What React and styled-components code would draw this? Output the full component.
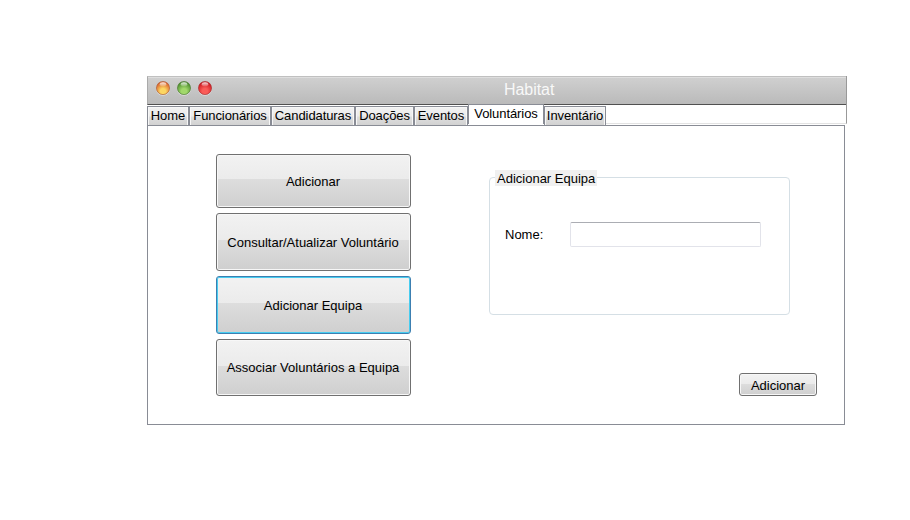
import React from 'react';
import styled, { createGlobalStyle, css } from 'styled-components';

const GlobalStyle = createGlobalStyle`
  * { box-sizing: border-box; }
  body {
    margin: 0;
    background: #fff;
    color: #000;
    font: 13px/15px "Liberation Sans", Arial, sans-serif;
    overflow: hidden;
  }
  button, input { font: inherit; color: inherit; }
`;

const Page = styled.main`
  height: 520px;
  padding: 76px 0 0 147px;
`;

const Header = styled.header`
  width: 700px;
  height: 48px;
  border-right: 1px solid #999;
  border-bottom: 1px solid #e3e3e3;
`;

const TitleBar = styled.div`
  display: flex;
  height: 29px;
  border-top: 1px solid #c0c0c0;
  border-bottom: 1px solid #505050;
  border-left: 1px solid #aaa;
  box-shadow: inset 0 1px #dedede;
  background: linear-gradient(#d0d0d0, #bababa);
`;

const Lights = styled.div`
  display: flex;
  gap: 5px;
  width: 356px;
  padding: 3px 0 0 7px;
`;

const Light = styled.svg`
  display: block;
  width: 16px;
  height: 16px;
  flex: none;
`;

const Title = styled.h1`
  margin: 0;
  padding-top: 4px;
  font-size: 16px;
  font-weight: 400;
  line-height: 18px;
  letter-spacing: -0.05px;
  color: #f8f8f8;
`;

const TabStrip = styled.nav`
  display: flex;
  align-items: flex-start;
  height: 19px;
`;

const Tab = styled.button`
  flex: none;
  width: ${(p) => p.$width}px;
  height: 19px;
  margin: 1px 0 0;
  padding: 0 0 1px;
  border: 1px solid #898c95;
  border-bottom: 0;
  background: linear-gradient(#f2f2f2, #ebebeb 50%, #dddddd 56%, #d2d2d2);
  box-shadow: inset 1px 1px #f7f7f7, inset -1px 0 #f7f7f7;
  line-height: 15px;
  text-align: center;
  white-space: nowrap;
  ${(p) =>
    p.$selected &&
    css`
      margin-top: -1px;
      height: 20px;
      padding-bottom: 3px;
      background: #fff;
      box-shadow: none;
    `}
`;

const TabName = styled.span`
  display: block;
  margin: 0 -2px;
  letter-spacing: -0.08px;
`;

const Panel = styled.section`
  display: flex;
  width: 698px;
  height: 300px;
  margin-top: 1px;
  border: 1px solid #898c95;
  background: #fff;
`;

const Actions = styled.div`
  display: flex;
  flex-direction: column;
  gap: 5px;
  width: 195px;
  margin: 28px 78px 0 68px;
`;

const Button = styled.button`
  flex: none;
  width: ${(p) => p.$width}px;
  height: ${(p) => p.$height}px;
  padding: ${(p) => p.$drop || 0}px ${(p) => (p.$drop ? 0 : 1)}px 0 0;
  border: 1px solid ${(p) => (p.$focused ? '#3c7fb1' : '#707070')};
  border-radius: 3px;
  background: linear-gradient(#f2f2f2, #ebebeb 47%, #dddddd 47%, #cfcfcf);
  box-shadow: inset 0 0 0 1px ${(p) => (p.$focused ? '#48cdf0' : '#f7f7f7')};
  text-align: center;
  white-space: nowrap;
`;

const Editor = styled.div`
  display: flex;
  flex-direction: column;
  width: 328px;
`;

const Group = styled.fieldset`
  width: 301px;
  height: 145px;
  margin: 44px 0 0;
  padding: 37px 0 0 15px;
  border: 1px solid #d5dfe5;
  border-radius: 4px;
`;

const Legend = styled.legend`
  margin-left: -10px;
  padding: 1px 2px 0;
  height: 15px;
  width: 102px;
  background: #f0f0f0;
  box-shadow: 0 1px #f0f0f0;
  white-space: nowrap;
`;

const Field = styled.label`
  display: flex;
  align-items: center;
`;

const FieldName = styled.span`
  width: 65px;
`;

const Input = styled.input`
  width: 191px;
  height: 25px;
  padding: 0 3px;
  border: 1px solid #e2e3ea;
  border-top-color: #abadb3;
  border-radius: 2px;
  background: #fff;
  outline: none;
`;

const Footer = styled.div`
  display: flex;
  justify-content: flex-end;
  margin-top: 58px;
`;

const tabs = [
  ['Home', 42],
  ['Funcionários', 82],
  ['Candidaturas', 84],
  ['Doações', 59],
  ['Eventos', 54],
  ['Voluntários', 76],
  ['Inventário', 62],
];

const lights = [
  ['orange', '#d8602c', '#fcd763', '#a3562f'],
  ['green', '#4a8c2c', '#a2d86c', '#48702f'],
  ['red', '#cc1820', '#fa5c58', '#9c2c2c'],
];

const actions = [
  ['Adicionar', 54],
  ['Consultar/Atualizar Voluntário', 58],
  ['Adicionar Equipa', 58],
  ['Associar Voluntários a Equipa', 57],
];

function TrafficLight({ id, dark, glow, rim }) {
  return (
    <Light viewBox="0 0 16 16" aria-hidden="true">
      <defs>
        <radialGradient id={`${id}-body`} cx="50%" cy="74%" r="66%">
          <stop offset="0" stopColor={glow} />
          <stop offset=".3" stopColor={glow} />
          <stop offset="1" stopColor={dark} />
        </radialGradient>
        <linearGradient id={`${id}-shine`} x2="0" y2="1">
          <stop offset="0" stopColor="#fff" stopOpacity=".9" />
          <stop offset="1" stopColor="#fff" stopOpacity=".15" />
        </linearGradient>
      </defs>
      <circle cx="8" cy="8.7" r="7.1" fill="#eee" opacity=".65" />
      <circle cx="8" cy="8" r="6.6" fill={`url(#${id}-body)`} stroke={rim} strokeWidth=".6" />
      <ellipse cx="8" cy="4.2" rx="3.3" ry="2" fill={`url(#${id}-shine)`} />
    </Light>
  );
}

export default function App() {
  return (
    <>
      <GlobalStyle />
      <Page>
        <Header>
          <TitleBar>
            <Lights>
              {lights.map(([id, dark, glow, rim]) => (
                <TrafficLight key={id} id={id} dark={dark} glow={glow} rim={rim} />
              ))}
            </Lights>
            <Title>Habitat</Title>
          </TitleBar>
          <TabStrip>
            {tabs.map(([name, width]) => (
              <Tab key={name} $width={width} $selected={name === 'Voluntários'}>
                <TabName>{name}</TabName>
              </Tab>
            ))}
          </TabStrip>
        </Header>
        <Panel>
          <Actions>
            {actions.map(([name, height]) => (
              <Button key={name} $width={195} $height={height} $focused={name === 'Adicionar Equipa'}>
                {name}
              </Button>
            ))}
          </Actions>
          <Editor>
            <Group>
              <Legend>Adicionar Equipa</Legend>
              <Field>
                <FieldName>Nome:</FieldName>
                <Input type="text" />
              </Field>
            </Group>
            <Footer>
              <Button $width={78} $height={23} $drop={2}>
                Adicionar
              </Button>
            </Footer>
          </Editor>
        </Panel>
      </Page>
    </>
  );
}
